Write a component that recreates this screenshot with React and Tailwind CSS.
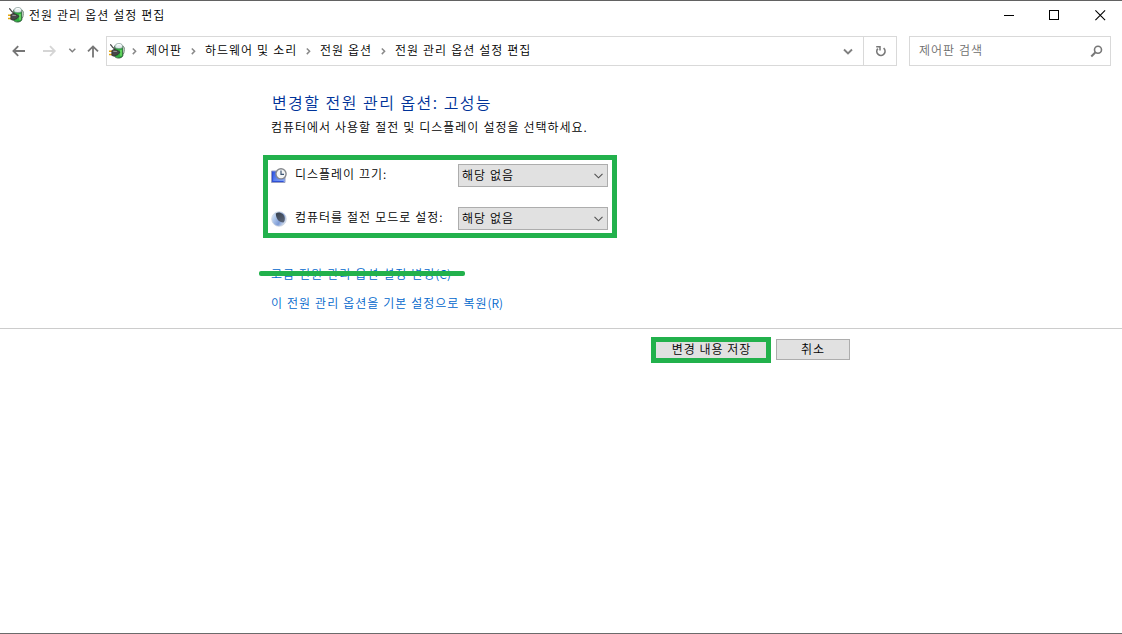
import React from 'react';

const crumbs = [
  { label: '제어판', width: 'w-[36px]' },
  { label: '하드웨어 및 소리', width: 'w-[92px]' },
  { label: '전원 옵션', width: 'w-[52px]' },
  { label: '전원 관리 옵션 설정 편집', width: 'w-[137px]' },
];

export default function App() {
  return (
    <div className="flex h-[634px] w-[1122px] flex-col overflow-hidden border-t border-b border-t-[#626262] border-b-[#6b6b6b] bg-white font-['Noto_Sans_CJK_KR','Malgun_Gothic',sans-serif] text-[12px] leading-[16px] font-[350] tracking-[0.97px] text-black [word-spacing:0.4px]">
      <TitleBar />
      <NavBar />
      <main className="flex h-[263px] shrink-0 flex-col border-b border-[#cccccc] pl-[263px]">
        <h1 className="mt-[23px] ml-[9px] h-[26px] text-[16px] leading-[26px] font-[350] tracking-[1.36px] whitespace-nowrap text-[#003399]">
          변경할 전원 관리 옵션: 고성능
        </h1>
        <p className="mt-[4px] ml-[8px] h-[16px] whitespace-nowrap">컴퓨터에서 사용할 절전 및 디스플레이 설정을 선택하세요.</p>

        <section className="mt-[20px] flex h-[83px] w-[354px] flex-col gap-[20px] border-5 border-[#22b14c] pt-[4px] pr-[4px] pl-[3px]">
          <SettingRow icon={<DisplayIcon />} label="디스플레이 끄기:" />
          <SettingRow icon={<SleepIcon />} label="컴퓨터를 절전 모드로 설정:" />
        </section>

        <div className="mt-[28px] ml-[8px] flex flex-col items-start gap-[13px] text-[#0066cc]">
          <a className="relative h-[16px] whitespace-nowrap">
            고급 전원 관리 옵션 설정 변경<span className="tracking-normal">(C)</span>
            <span className="absolute top-[5px] left-[-12px] h-[5px] w-[206px] rounded-[2px] bg-[#22b14c]" />
          </a>
          <a className="h-[16px] whitespace-nowrap">
            이 전원 관리 옵션을 기본 설정으로 복원<span className="tracking-normal">(R)</span>
          </a>
        </div>
      </main>

      <footer className="flex gap-[5px] pt-[8px] pl-[651px]">
        <button className="h-[26px] w-[120px] border-5 border-[#22b14c] bg-[#e1e1e1] pb-[2px] pl-[1px] leading-[14px] whitespace-nowrap">변경 내용 저장</button>
        <button className="mt-[2px] h-[21px] w-[74px] border border-[#adadad] bg-[#e1e1e1] pb-[1px] leading-[18px]">취소</button>
      </footer>
    </div>
  );
}

function TitleBar() {
  return (
    <header className="flex h-[28px] shrink-0 items-center pl-[8px]">
      <PowerIcon />
      <span className="ml-[5px] whitespace-nowrap">전원 관리 옵션 설정 편집</span>
      <div className="ml-auto flex items-center pr-[16px]">
        <svg width="10" height="11" shapeRendering="crispEdges"><path d="M0 5.5h10" stroke="#000" /></svg>
        <svg width="11" height="11" shapeRendering="crispEdges" className="ml-[35px]">
          <rect x=".5" y=".5" width="9" height="9" fill="none" stroke="#000" />
        </svg>
        <svg width="11" height="11" className="ml-[35px]"><path d="M.4.4l9.7 9.7M10.1.4L.4 10.1" stroke="#000" strokeWidth="1.1" /></svg>
      </div>
    </header>
  );
}

function NavBar() {
  return (
    <nav className="mt-[7px] flex h-[30px] shrink-0 items-center">
      <svg width="106" height="30" fill="none" strokeWidth="1.8">
        <path d="M25 15H13.5M18.2 10.2L13.4 15l4.8 4.8" stroke="#767676" />
        <path d="M43 15h11.5M50 10.2l4.8 4.8-4.8 4.8" stroke="#d5d5d5" />
        <path d="M69.3 12.7l3 3 3-3" stroke="#808080" strokeWidth="1.5" />
        <path d="M93 21.5V10.5M88 15.4l5-5 5 5" stroke="#767676" />
      </svg>
      <div className="flex h-[30px] w-[791px] items-center border border-[#d9d9d9] pl-[2px]">
        <PowerIcon />
        {crumbs.map((c) => (
          <React.Fragment key={c.label}>
            <svg width="21" height="12" className="shrink-0" fill="none"><path d="M7.8 3.5l2.8 2.8-2.8 2.8" stroke="#888" strokeWidth="1.5" /></svg>
            <span className={`mt-[-2px] mr-[2px] shrink-0 whitespace-nowrap ${c.width}`}>{c.label}</span>
          </React.Fragment>
        ))}
        <svg width="10" height="10" className="mr-[10px] ml-auto" fill="none"><path d="M1 3.5l4 4 4-4" stroke="#808080" strokeWidth="1.9" /></svg>
        <div className="flex h-full w-[33px] items-center justify-center border-l border-[#d9d9d9] pl-[2px]">
          <svg width="12" height="12" fill="none" stroke="#777" strokeWidth="1.7">
            <path d="M8.6 3.2A4.1 4.1 0 1 1 2.8 3.6" />
            <path d="M1.2 1.7h4.5M5 1v4.5" strokeWidth="1.5" />
          </svg>
        </div>
      </div>
      <div className="ml-[12px] flex h-[30px] w-[202px] items-center justify-between border border-[#d9d9d9] pr-[7px] pl-[9px]">
        <span className="mt-[-2px] text-[#6d6d6d]">제어판 검색</span>
        <svg width="13" height="13" fill="none" stroke="#777">
          <circle cx="8" cy="4.7" r="3.5" strokeWidth="1.6" />
          <path d="M5.5 7.3L1.3 11.5" strokeWidth="2" />
        </svg>
      </div>
    </nav>
  );
}

function SettingRow({ icon, label }) {
  return (
    <div className="flex h-[23px] items-center">
      {icon}
      <span className="mt-[-3px] ml-[8px] whitespace-nowrap">{label}</span>
      <div className="ml-auto flex h-[23px] w-[150px] items-center justify-between border border-[#adadad] bg-[#e1e1e1] pr-[4px] pl-[3px]">
        <span className="mt-[-1px]">해당 없음</span>
        <svg width="9" height="6" fill="none"><path d="M.5.8l4 4 4-4" stroke="#505050" strokeWidth="1.1" /></svg>
      </div>
    </div>
  );
}

// green battery with a plug in front
function PowerIcon() {
  return (
    <svg width="16" height="16" viewBox="0 0 16 16" className="shrink-0" fill="none">
      <path d="M13 3.6c2-.3 2.4.4 2.4 2.6 0 3-.6 5-2.4 6" stroke="#7d9083" />
      <path d="M5.8 3v10.6c1.8 2 6.2 2 8-.6V3z" fill="#2fae40" stroke="#2c5535" strokeWidth=".9" />
      <path d="M6 4.6V2.6C7 0 12.600 0 13.600 2.400v2.200c-2 1.200-5.600 1.200-7.600 0z" fill="#e3eced" stroke="#768c87" strokeWidth=".7" />
      <path d="M8 2.200c1-.9 3-.9 4 0" stroke="#fff" strokeWidth="1.200" />
      <path d="M12 7v5.800" stroke="#7de86d" strokeWidth="1.300" />
      <path d="M1 1.600c2 0 1.300 2.600 3.800 3.600l1 1.400" stroke="#484848" strokeWidth="1.300" />
      <path d="M0 8.300h3.500M0 11.600h3.500" stroke="#e3a60f" strokeWidth="1.500" />
      <path d="M2.800 7.600L5 6.400l3.200.8 2.800 2-2 2.400L5 13.200l-2.200-.8z" fill="#474749" stroke="#2b2b2b" strokeWidth=".7" />
      <path d="M4.300 8.300l3.600.2" stroke="#929292" strokeWidth="1.200" />
    </svg>
  );
}

function DisplayIcon() {
  return (
    <svg width="16" height="16" viewBox="0 0 16 16" className="shrink-0">
      <defs>
        <linearGradient id="screen" x2="1" y2="1">
          <stop stopColor="#2a50e0" />
          <stop offset="1" stopColor="#8fb2ff" />
        </linearGradient>
      </defs>
      <path d="M.5 3h13.500v11.500H.5z" fill="url(#screen)" stroke="#9a9fc0" />
      <path d="M1.600 3.800v9.700h11" fill="none" stroke="#2f50d4" strokeWidth="1.100" />
      <circle cx="10" cy="5.800" r="5.100" fill="#f4f5f6" stroke="#85888d" strokeWidth="1.400" />
      <path d="M10 2.600v3.700h3" fill="none" stroke="#3d5775" strokeWidth="1.200" />
    </svg>
  );
}

// moon disc, the unlit part towards the upper right
function SleepIcon() {
  return (
    <svg width="16" height="16" viewBox="0 0 16 16" className="shrink-0">
      <defs>
        <linearGradient id="moon" x2="1" y2=".6">
          <stop stopColor="#eef3fa" />
          <stop offset=".3" stopColor="#b8ceee" />
          <stop offset=".7" stopColor="#7d9bd6" />
          <stop offset="1" stopColor="#d5dfee" />
        </linearGradient>
        <linearGradient id="shade" x1=".2" x2=".8" y2="1">
          <stop stopColor="#3a424f" />
          <stop offset="1" stopColor="#59657a" />
        </linearGradient>
      </defs>
      <circle cx="8" cy="8" r="7.300" fill="url(#moon)" stroke="#ccd4e0" strokeWidth=".8" />
      <path d="M4.800 2.400C8.500.2 13.500 2.800 13.800 7.400c.1 2.200-.5 3.300-1.500 4.100C8 11.200 4.800 7.600 4.800 2.400z" fill="url(#shade)" />
    </svg>
  );
}
